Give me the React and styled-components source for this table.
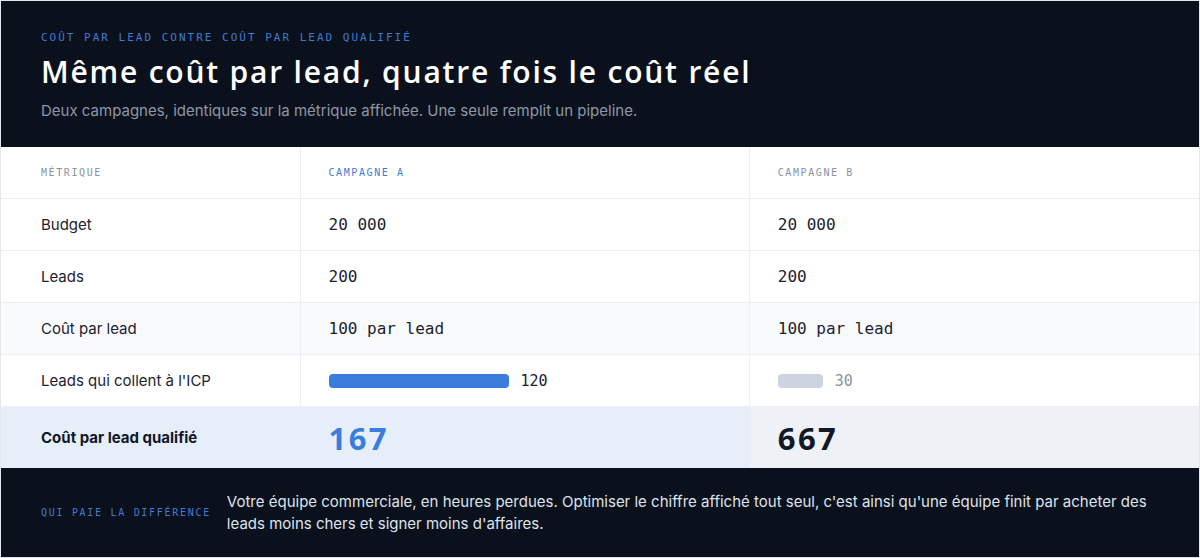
import React from 'react';
import styled, { createGlobalStyle } from 'styled-components';

const GlobalStyle = createGlobalStyle`
  html, body {
    margin: 0;
    padding: 0;
    background: #ffffff;
  }
  * {
    box-sizing: border-box;
  }
`;

const MONO = '"DejaVu Sans Mono", "Liberation Mono", monospace';
const SANS = 'Inter, "Noto Sans", sans-serif';

const rows = [
  { label: 'Budget', a: '20 000', b: '20 000' },
  { label: 'Leads', a: '200', b: '200' },
  { label: 'Coût par lead', a: '100 par lead', b: '100 par lead', tinted: true },
];

const icp = { label: "Leads qui collent à l'ICP", a: 120, b: 30, max: 120 };

const App = () => {
  return (
    <>
      <GlobalStyle />
      <Card>
        <Header>
          <Eyebrow>Coût par lead contre coût par lead qualifié</Eyebrow>
          <Title>Même coût par lead, quatre fois le coût réel</Title>
          <Subtitle>
            Deux campagnes, identiques sur la métrique affichée. Une seule remplit un pipeline.
          </Subtitle>
        </Header>

        <Table>
          <HeadCell>Métrique</HeadCell>
          <HeadCell $accent>Campagne A</HeadCell>
          <HeadCell>Campagne B</HeadCell>

          {rows.map(row => (
            <React.Fragment key={row.label}>
              <LabelCell $tinted={row.tinted}>{row.label}</LabelCell>
              <ValueCell $tinted={row.tinted}>{row.a}</ValueCell>
              <ValueCell $tinted={row.tinted}>{row.b}</ValueCell>
            </React.Fragment>
          ))}

          <LabelCell>{icp.label}</LabelCell>
          <ValueCell>
            <Bar $accent style={{ width: (icp.a / icp.max) * 180 }} />
            <BarValue>{icp.a}</BarValue>
          </ValueCell>
          <ValueCell>
            <Bar style={{ width: (icp.b / icp.max) * 180 }} />
            <BarValue $muted>{icp.b}</BarValue>
          </ValueCell>

          <TotalLabel>Coût par lead qualifié</TotalLabel>
          <TotalCell $tone="blue">
            <BigNumber $accent>167</BigNumber>
          </TotalCell>
          <TotalCell $tone="gray">
            <BigNumber>667</BigNumber>
          </TotalCell>
        </Table>

        <Footer>
          <FooterLabel>Qui paie la différence</FooterLabel>
          <FooterText>
            Votre équipe commerciale, en heures perdues. Optimiser le chiffre affiché tout seul,
            c'est ainsi qu'une équipe finit par acheter des leads moins chers et signer moins
            d'affaires.
          </FooterText>
        </Footer>
      </Card>
    </>
  );
};

export default App;

const Card = styled.div`
  width: 1200px;
  height: 558px;
  border: 1px solid #e3e8ef;
  display: flex;
  flex-direction: column;
  overflow: hidden;
  font-family: ${SANS};
`;

const Header = styled.header`
  background: #0b111c;
  height: 146px;
  padding: 30px 40px 0;
  display: flex;
  flex-direction: column;
`;

const Eyebrow = styled.div`
  font-family: ${MONO};
  font-size: 11px;
  letter-spacing: 2px;
  text-transform: uppercase;
  color: #3f7ad0;
  line-height: 14px;
`;

const Title = styled.h1`
  margin: 9px 0 0;
  font-family: "Open Sans", ${SANS};
  font-weight: 600;
  font-size: 30px;
  line-height: 36px;
  letter-spacing: 1.8px;
  color: #ffffff;
`;

const Subtitle = styled.p`
  margin: 11px 0 0;
  font-size: 15px;
  line-height: 20px;
  color: #8d97a8;
`;

const Table = styled.div`
  display: grid;
  grid-template-columns: 2fr 3fr 3fr;
  grid-template-rows: repeat(5, 52px) 61px;
`;

const Cell = styled.div`
  display: flex;
  align-items: center;
  border-bottom: 1px solid #eceff4;
  background: ${({ $tinted }) => ($tinted ? '#f8fafc' : '#ffffff')};
  &:not(:nth-child(3n)) {
    border-right: 1px solid #eceff4;
  }
  &:nth-child(3n + 1) {
    padding-left: 40px;
  }
  &:not(:nth-child(3n + 1)) {
    padding-left: 28px;
  }
`;

const HeadCell = styled(Cell)`
  font-family: ${MONO};
  font-size: 10px;
  letter-spacing: 1.6px;
  text-transform: uppercase;
  color: ${({ $accent }) => ($accent ? '#3f7ad0' : '#8a93a2')};
`;

const LabelCell = styled(Cell)`
  font-size: 15px;
  color: #1c2230;
`;

const ValueCell = styled(Cell)`
  font-family: ${MONO};
  font-size: 16px;
  color: #1c2230;
  gap: 12px;
`;

const Bar = styled.div`
  height: 14px;
  border-radius: 4px;
  background: ${({ $accent }) => ($accent ? '#3b7ddd' : '#cdd4e0')};
`;

const BarValue = styled.span`
  font-size: 15px;
  color: ${({ $muted }) => ($muted ? '#8a93a2' : '#1c2230')};
`;

const TotalLabel = styled(Cell)`
  border-bottom: none;
  border-right: none !important;
  background: #e6eefa;
  font-size: 15px;
  font-weight: 700;
  color: #111827;
`;

const TotalCell = styled(Cell)`
  border-bottom: none;
  background: ${({ $tone }) => ($tone === 'blue' ? '#e6eefa' : '#eef2f6')};
  border-right-color: #e6eefa !important;
`;

const BigNumber = styled.span`
  font-family: "Open Sans", ${SANS};
  font-weight: 700;
  font-size: 31px;
  letter-spacing: 2.4px;
  color: ${({ $accent }) => ($accent ? '#3b7ddd' : '#111827')};
`;

const Footer = styled.footer`
  flex: 1;
  background: #0b111c;
  display: flex;
  align-items: center;
  padding: 0 40px;
  gap: 16px;
`;

const FooterLabel = styled.div`
  flex: none;
  font-family: ${MONO};
  font-size: 10px;
  letter-spacing: 1.7px;
  text-transform: uppercase;
  color: #3f7ad0;
`;

const FooterText = styled.p`
  margin: 0;
  font-size: 15px;
  line-height: 22px;
  color: #dde3ec;
`;
